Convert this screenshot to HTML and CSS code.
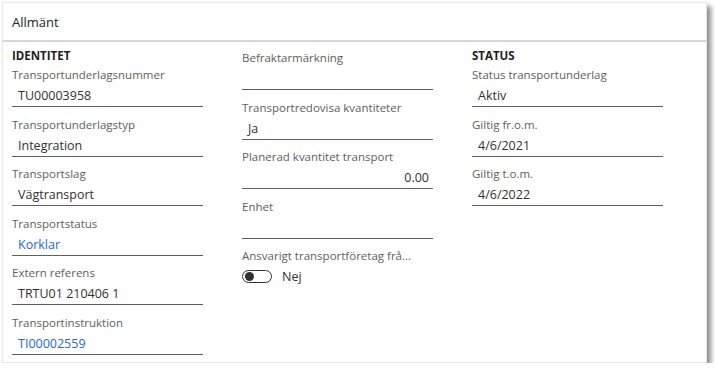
FILE: index.html
```html
<!doctype html>
<html>
    <head>
        <meta charset="utf-8">
        <meta name="viewport" content="width=device-width, initial-scale=1">
        <title>Allmänt</title>
        <link rel="stylesheet" href="styles.css">
    </head>
    <body>
        <div class="card">
            <div class="card-header">Allmänt</div>
            <div class="card-body">
                <div class="column">
                    <div class="group-title">IDENTITET</div>
                    <div class="field">
                        <div class="label">Transportunderlagsnummer</div>
                        <div class="value">TU00003958</div>
                    </div>
                    <div class="field">
                        <div class="label">Transportunderlagstyp</div>
                        <div class="value">Integration</div>
                    </div>
                    <div class="field">
                        <div class="label">Transportslag</div>
                        <div class="value">Vägtransport</div>
                    </div>
                    <div class="field">
                        <div class="label">Transportstatus</div>
                        <div class="value link">Korklar</div>
                    </div>
                    <div class="field">
                        <div class="label">Extern referens</div>
                        <div class="value">TRTU01 210406 1</div>
                    </div>
                    <div class="field">
                        <div class="label">Transportinstruktion</div>
                        <div class="value link">TI00002559</div>
                    </div>
                </div>

                <div class="column column-plain">
                    <div class="field">
                        <div class="label">Befraktarmärkning</div>
                        <div class="value"></div>
                    </div>
                    <div class="field">
                        <div class="label">Transportredovisa kvantiteter</div>
                        <div class="value">Ja</div>
                    </div>
                    <div class="field">
                        <div class="label">Planerad kvantitet transport</div>
                        <div class="value number">0.00</div>
                    </div>
                    <div class="field">
                        <div class="label">Enhet</div>
                        <div class="value"></div>
                    </div>
                    <div class="field">
                        <div class="label">Ansvarigt transportföretag frå...</div>
                        <div class="toggle-row">
                            <span class="toggle"><span class="knob"></span></span>
                            <span class="toggle-text">Nej</span>
                        </div>
                    </div>
                </div>

                <div class="column">
                    <div class="group-title">STATUS</div>
                    <div class="field">
                        <div class="label">Status transportunderlag</div>
                        <div class="value">Aktiv</div>
                    </div>
                    <div class="field">
                        <div class="label">Giltig fr.o.m.</div>
                        <div class="value">4/6/2021</div>
                    </div>
                    <div class="field">
                        <div class="label">Giltig t.o.m.</div>
                        <div class="value">4/6/2022</div>
                    </div>
                </div>
            </div>
        </div>
    </body>
</html>
```

FILE: styles.css
```css
* {
    margin: 0;
    padding: 0;
    box-sizing: border-box;
}

body {
    background-color: #ffffff;
    font-family: "Open Sans", sans-serif;
    color: #323130;
    padding: 2px 0 0 2px;
}

.card {
    width: 705px;
    height: 361px;
    background-color: #ffffff;
    border: 1px solid #e6e6e6;
    box-shadow: 4px 4px 5px rgba(0, 0, 0, 0.45);
}

.card-header {
    height: 39px;
    padding: 1px 9px 0;
    font-size: 13px;
    line-height: 37px;
    color: #201f1e;
    border-bottom: 2px solid #d6d6d6;
}

.card-body {
    display: grid;
    grid-template-columns: repeat(3, 230px);
    padding: 5px 9px 0;
}

.column-plain {
    padding-top: 1px;
}

.group-title {
    font-size: 11.5px;
    font-weight: 700;
    line-height: 18px;
    color: #201f1e;
}

.field {
    width: 191px;
    margin-bottom: 7.5px;
}

.label {
    font-size: 11.5px;
    line-height: 19px;
    color: #605e5c;
    white-space: nowrap;
}

.value {
    height: 23px;
    padding: 2px 4px 0 6px;
    font-size: 12.5px;
    line-height: 20px;
    color: #323130;
    border-bottom: 1px solid #605e5c;
}

.value.link {
    color: #2266e3;
}

.value.number {
    text-align: right;
}

.toggle-row {
    display: flex;
    align-items: center;
    gap: 10px;
    height: 23px;
}

.toggle {
    width: 30px;
    height: 13px;
    border: 1px solid #323130;
    border-radius: 7px;
    display: flex;
    align-items: center;
    padding-left: 2px;
}

.knob {
    width: 9px;
    height: 9px;
    border-radius: 50%;
    background-color: #323130;
}

.toggle-text {
    font-size: 12.5px;
    color: #323130;
}
```
